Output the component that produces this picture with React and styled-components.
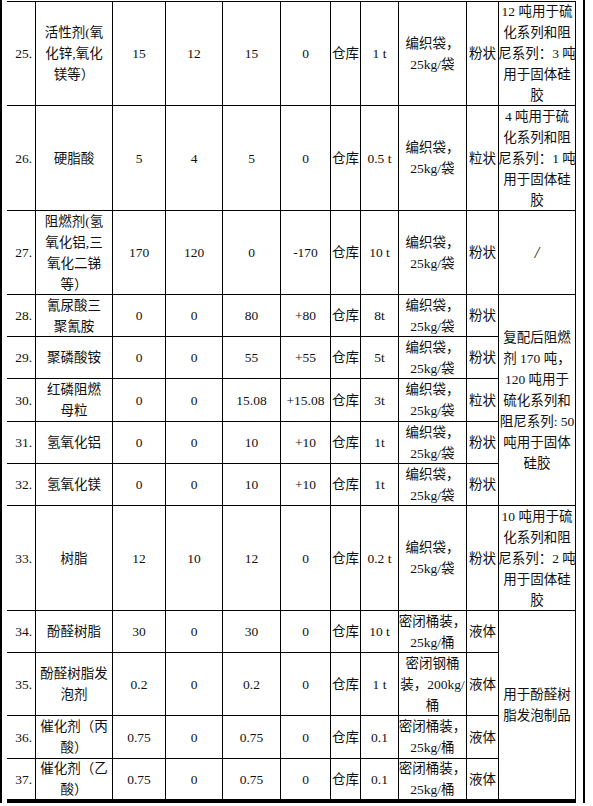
import React from 'react';
import styled, { createGlobalStyle } from 'styled-components';

// row heights (px) including each row's bottom rule
const heights = [104, 105, 84, 42, 42, 43, 42, 42, 105, 42, 63, 43, 44];
const cols = [29, 77, 53, 57, 58, 50, 30, 38, 68, 32, 77];

const bag = ['编织袋，', '25kg/袋'];
const drum = ['密闭桶装，', '25kg/桶'];

const rows = [
  { no: '25.', name: ['活性剂(氧', '化锌,氧化', '镁等）'], v: ['15', '12', '15', '0'], size: '1 t', pack: bag, form: '粉状',
    use: { lines: ['12 吨用于硫', '化系列和阻', '尼系列：3 吨', '用于固体硅', '胶'] } },
  { no: '26.', name: ['硬脂酸'], v: ['5', '4', '5', '0'], size: '0.5 t', pack: bag, form: '粒状',
    use: { lines: ['4 吨用于硫', '化系列和阻', '尼系列：1 吨', '用于固体硅', '胶'] } },
  { no: '27.', name: ['阻燃剂(氢', '氧化铝,三', '氧化二锑', '等）'], v: ['170', '120', '0', '-170'], size: '10 t', pack: bag, form: '粉状',
    use: { lines: ['/'], big: true } },
  { no: '28.', name: ['氰尿酸三', '聚氰胺'], v: ['0', '0', '80', '+80'], size: '8t', pack: bag, form: '粉状',
    use: { lines: ['复配后阻燃', '剂 170 吨，', '120 吨用于', '硫化系列和', '阻尼系列: 50', '吨用于固体', '硅胶'], span: 5 } },
  { no: '29.', name: ['聚磷酸铵'], v: ['0', '0', '55', '+55'], size: '5t', pack: bag, form: '粉状' },
  { no: '30.', name: ['红磷阻燃', '母粒'], v: ['0', '0', '15.08', '+15.08'], size: '3t', pack: bag, form: '粒状' },
  { no: '31.', name: ['氢氧化铝'], v: ['0', '0', '10', '+10'], size: '1t', pack: bag, form: '粉状' },
  { no: '32.', name: ['氢氧化镁'], v: ['0', '0', '10', '+10'], size: '1t', pack: bag, form: '粉状' },
  { no: '33.', name: ['树脂'], v: ['12', '10', '12', '0'], size: '0.2 t', pack: bag, form: '粉状',
    use: { lines: ['10 吨用于硫', '化系列和阻', '尼系列：2 吨', '用于固体硅', '胶'] } },
  { no: '34.', name: ['酚醛树脂'], v: ['30', '0', '30', '0'], size: '10 t', pack: drum, form: '液体',
    use: { lines: ['用于酚醛树', '脂发泡制品'], span: 4 } },
  { no: '35.', name: ['酚醛树脂发', '泡剂'], v: ['0.2', '0', '0.2', '0'], size: '1 t', pack: ['密闭钢桶', '装，200kg/', '桶'], form: '液体' },
  { no: '36.', name: ['催化剂（丙', '酸）'], v: ['0.75', '0', '0.75', '0'], size: '0.1', pack: drum, form: '液体' },
  { no: '37.', name: ['催化剂（乙', '酸）'], v: ['0.75', '0', '0.75', '0'], size: '0.1', pack: drum, form: '液体' },
];

const GlobalStyle = createGlobalStyle`
  html, body { margin: 0; padding: 0; background: #fff; }
  body {
    font-family: "Liberation Serif", "Noto Sans CJK SC", serif;
    color: #111;
  }
`;

const Frame = styled.div`
  box-sizing: border-box;
  width: 585px;
  padding: 1px 7px 0 5px;
  border-left: 2px solid #000;
  border-right: 2px solid #000;
`;

const Sheet = styled.div`
  display: grid;
  width: 569px;
  grid-template-columns: ${cols.map(c => c + 'px').join(' ')};
  grid-template-rows: ${heights.map(h => h + 'px').join(' ')};
  border-top: 1px solid #000;
  font-size: 13.5px;
  line-height: 21px;
`;

const Cell = styled.div`
  box-sizing: border-box;
  display: flex;
  flex-direction: column;
  justify-content: center;
  align-items: ${p => (p.$right ? 'flex-end' : 'center')};
  padding-right: ${p => (p.$right ? '3px' : '0')};
  grid-row: span ${p => p.$span || 1};
  border-right: 1px solid #000;
  border-bottom: ${p => (p.$last ? '4px' : '1px')} solid #000;
  font-size: ${p => (p.$big ? '16px' : 'inherit')};
  font-style: ${p => (p.$big ? 'italic' : 'normal')};
  text-align: center;
  white-space: nowrap;
`;

const Line = styled.span`
  display: block;
`;

function Lines({ items }) {
  return items.map((t, i) => <Line key={i}>{t}</Line>);
}

export default function App() {
  const lastRow = rows.length - 1;
  return (
    <>
      <GlobalStyle />
      <Frame>
        <Sheet>
          {rows.map((r, i) => {
            const last = i === lastRow;
            return (
              <React.Fragment key={r.no}>
                <Cell $right $last={last}>{r.no}</Cell>
                <Cell $last={last}><Lines items={r.name} /></Cell>
                {r.v.map((x, j) => <Cell key={j} $last={last}>{x}</Cell>)}
                <Cell $last={last}>仓库</Cell>
                <Cell $last={last}>{r.size}</Cell>
                <Cell $last={last}><Lines items={r.pack} /></Cell>
                <Cell $last={last}>{r.form}</Cell>
                {r.use && (
                  <Cell $span={r.use.span} $big={r.use.big} $last={i + (r.use.span || 1) - 1 === lastRow}>
                    <Lines items={r.use.lines} />
                  </Cell>
                )}
              </React.Fragment>
            );
          })}
        </Sheet>
      </Frame>
    </>
  );
}
